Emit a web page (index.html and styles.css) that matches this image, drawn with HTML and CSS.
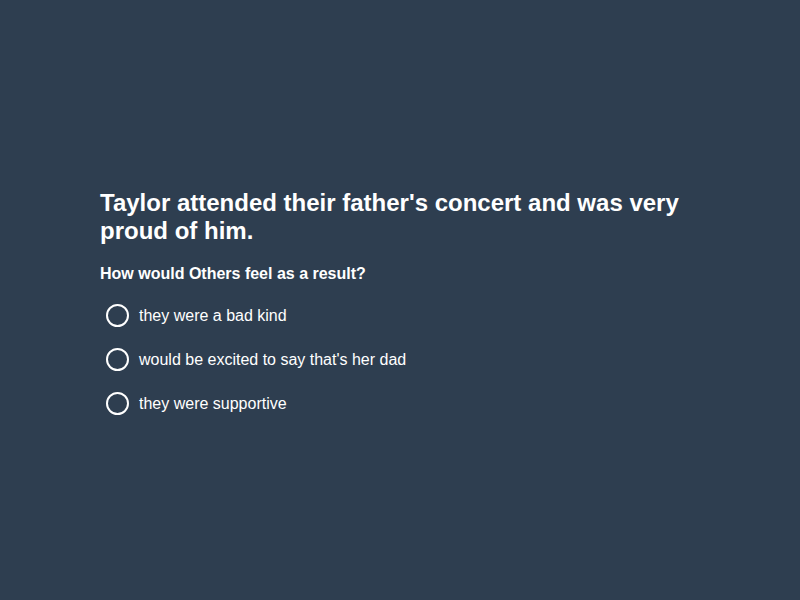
FILE: index.html
```html
<!DOCTYPE html>
<html>
<head>
<meta charset="utf-8">
<link rel="stylesheet" href="styles.css">
</head>
<body>
<main class="page">
  <section class="card">
    <h1 class="title">Taylor attended their father's concert and was very proud of him.</h1>
    <p class="question">How would Others feel as a result?</p>
    <div class="options">
      <label class="option"><span class="radio"></span><span class="text">they were a bad kind</span></label>
      <label class="option"><span class="radio"></span><span class="text">would be excited to say that's her dad</span></label>
      <label class="option"><span class="radio"></span><span class="text">they were supportive</span></label>
    </div>
  </section>
</main>
</body>
</html>
```
FILE: styles.css
```css
html, body {
  margin: 0;
  padding: 0;
  background: #2e3e50;
}
.page {
  width: 800px;
  height: 600px;
  display: flex;
  align-items: center;
  justify-content: center;
  font-family: "Liberation Sans", Arial, sans-serif;
  color: #ffffff;
}
.card {
  width: 600px;
  padding-top: 14px;
}
.title {
  margin: 0 0 19px 0;
  font-size: 24px;
  line-height: 28px;
  font-weight: bold;
}
.question {
  margin: 0 0 9px 0;
  font-size: 16px;
  line-height: 20px;
  font-weight: bold;
}
.options {
  display: flex;
  flex-direction: column;
}
.option {
  display: flex;
  align-items: center;
  height: 44px;
  gap: 10px;
  padding-left: 6px;
  font-size: 16px;
}
.text {
  padding-top: 2px;
}
.radio {
  width: 19px;
  height: 19px;
  border: 2px solid #ffffff;
  border-radius: 50%;
  flex: none;
}
```
